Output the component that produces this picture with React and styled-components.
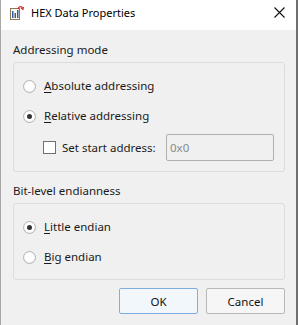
import React from "react";
import styled, { createGlobalStyle } from "styled-components";

const Global = createGlobalStyle`
  html, body {
    margin: 0;
    padding: 0;
    background: #f0f0f0;
  }
  body {
    font-family: "Noto Sans", "Open Sans", sans-serif;
    font-size: 11.5px;
    color: #1a1a1a;
  }
`;

function HexIcon() {
  return (
    <svg width="15" height="15" viewBox="0 0 15 15">
      <rect x="1.5" y="3.5" width="9" height="11" fill="#fdfbf0" stroke="#8a7a5a" />
      <rect x="3" y="6" width="1.5" height="7" fill="#2f5fa8" />
      <rect x="5.5" y="8" width="1.5" height="5" fill="#5a5a5a" />
      <rect x="8" y="5" width="1.5" height="8" fill="#2f5fa8" />
      <path d="M9 4 C10 1, 13 1, 13.5 3.5" fill="none" stroke="#d0302a" strokeWidth="1.3" />
      <path d="M12 3 L14 4.5 L14.5 2" fill="none" stroke="#d0302a" strokeWidth="1.1" />
    </svg>
  );
}

function CloseIcon() {
  return (
    <svg width="11" height="11" viewBox="0 0 11 11">
      <path d="M0.5 0.5 L10.5 10.5 M10.5 0.5 L0.5 10.5" stroke="#111" strokeWidth="1.1" />
    </svg>
  );
}

function Radio({ checked, label, accel }) {
  const rest = label.slice(1);
  return (
    <Row>
      <RadioCircle checked={checked} />
      <Label>
        <u>{accel}</u>
        {rest}
      </Label>
    </Row>
  );
}

function App() {
  return (
    <Window>
      <Global />
      <TitleBar>
        <TitleLeft>
          <HexIcon />
          <Title>HEX Data Properties</Title>
        </TitleLeft>
        <CloseBox>
          <CloseIcon />
        </CloseBox>
      </TitleBar>

      <Body>
        <SectionLabel>Addressing mode</SectionLabel>
        <GroupBox>
          <Radio accel="A" label="Absolute addressing" />
          <Radio accel="R" label="Relative addressing" checked />
          <StartRow>
            <Checkbox />
            <Label>Set start address:</Label>
            <AddressInput>0x0</AddressInput>
          </StartRow>
        </GroupBox>

        <SectionLabel second>Bit-level endianness</SectionLabel>
        <GroupBox bottom={7}>
          <Radio accel="L" label="Little endian" checked />
          <Radio accel="B" label="Big endian" />
        </GroupBox>

        <ButtonRow>
          <Button primary>OK</Button>
          <Button>Cancel</Button>
        </ButtonRow>
      </Body>
    </Window>
  );
}

export default App;

const Window = styled.div`
  width: 298px;
  height: 325px;
  box-sizing: border-box;
  border-left: 1px solid #a8a8a8;
  border-right: 2px solid #6f6f6f;
  background: #f0f0f0;
  display: flex;
  flex-direction: column;
  overflow: hidden;
`;

const TitleBar = styled.div`
  height: 30px;
  flex: none;
  background: #ffffff;
  display: flex;
  align-items: center;
  justify-content: space-between;
  padding: 0 10px 0 8px;
`;

const TitleLeft = styled.div`
  display: flex;
  align-items: center;
  gap: 7px;
  margin-top: -6px;
`;

const Title = styled.span`
  font-size: 11px;
  color: #000;
`;

const CloseBox = styled.div`
  display: flex;
  align-items: center;
  margin-top: -6px;
  margin-right: 1px;
`;

const Body = styled.div`
  padding: 0 11px 0 12px;
  display: flex;
  flex-direction: column;
`;

const SectionLabel = styled.div`
  height: 16px;
  line-height: 16px;
  margin-top: ${(p) => (p.second ? "11px" : "12px")};
  margin-bottom: 4px;
`;

const GroupBox = styled.div`
  border: 1px solid #dcdcdc;
  border-radius: 3px;
  padding: 8px 10px ${(p) => p.bottom ?? 10}px 9px;
  display: flex;
  flex-direction: column;
`;

const Row = styled.div`
  height: 30px;
  display: flex;
  align-items: center;
  gap: 8px;
`;

const RadioCircle = styled.span`
  width: 13px;
  height: 13px;
  box-sizing: border-box;
  border-radius: 50%;
  border: 1px solid #b5b5b5;
  background: radial-gradient(circle at 50% 40%, #ffffff 55%, #ececec 100%);
  box-shadow: inset 0 0 1px rgba(0, 0, 0, 0.15);
  position: relative;
  flex: none;

  &::after {
    content: "";
    display: ${(p) => (p.checked ? "block" : "none")};
    position: absolute;
    left: 3px;
    top: 3px;
    width: 5px;
    height: 5px;
    border-radius: 50%;
    background: #333;
  }
`;

const Label = styled.span`
  line-height: 16px;
  white-space: nowrap;

  u {
    text-decoration-thickness: 1px;
    text-underline-offset: 2px;
  }
`;

const StartRow = styled.div`
  height: 27px;
  margin-top: 3px;
  display: flex;
  align-items: center;
  padding-left: 20px;
`;

const Checkbox = styled.span`
  width: 13px;
  height: 13px;
  box-sizing: border-box;
  border: 1px solid #707070;
  background: #fff;
  flex: none;
  margin-right: 6px;
`;

const AddressInput = styled.div`
  margin-left: auto;
  width: 108px;
  height: 27px;
  box-sizing: border-box;
  border: 1px solid #b0b0b0;
  border-radius: 2px;
  background: #f0f0f0;
  color: #8a8a8a;
  padding-left: 3px;
  display: flex;
  align-items: center;
`;

const ButtonRow = styled.div`
  margin-top: 8px;
  display: flex;
  justify-content: flex-end;
  gap: 8px;
`;

const Button = styled.div`
  width: 79px;
  height: 26px;
  box-sizing: border-box;
  border: 1px solid ${(p) => (p.primary ? "#7eaee0" : "#b8b8b8")};
  border-radius: 2px;
  background: ${(p) => (p.primary ? "#f2f7fc" : "#f6f6f6")};
  display: flex;
  align-items: center;
  justify-content: center;
  color: #111;
`;
